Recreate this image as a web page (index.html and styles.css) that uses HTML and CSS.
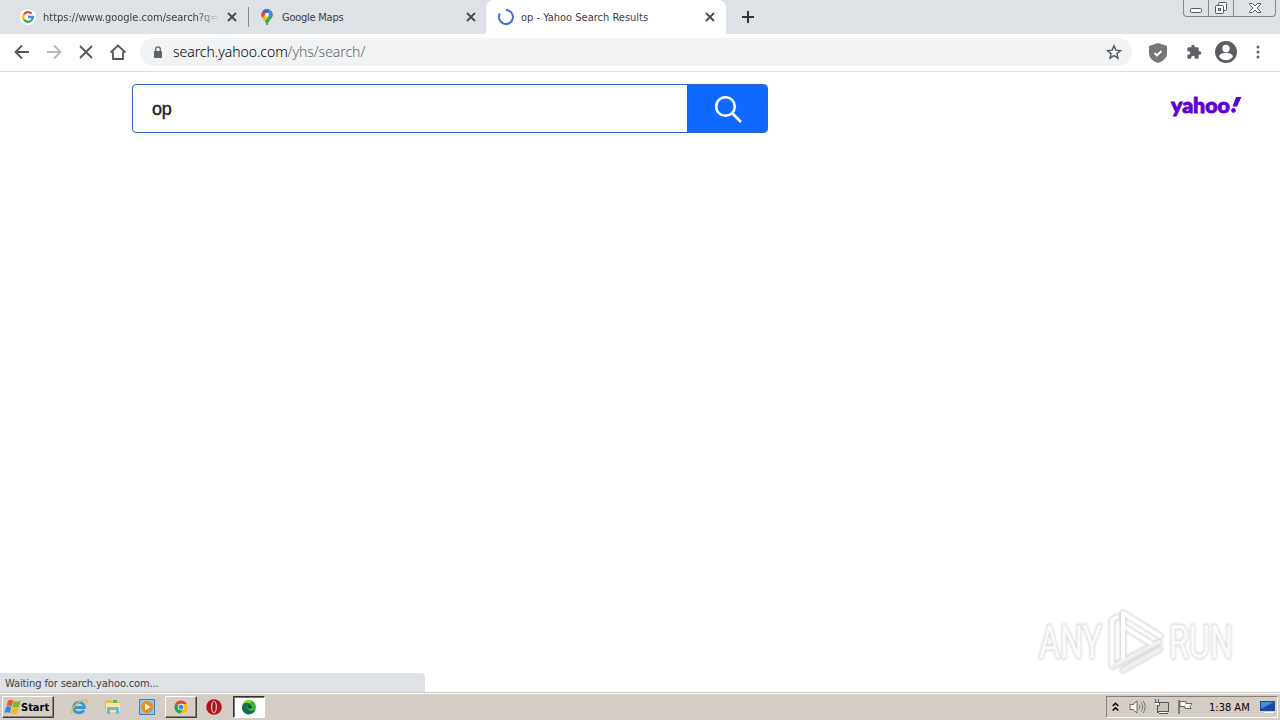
FILE: index.html
```html
<!DOCTYPE html>
<html lang="en">
<head>
    <meta charset="UTF-8">
    <meta name="viewport" content="width=device-width, initial-scale=1.0">
    <title>op - Yahoo Search Results</title>
    <link rel="stylesheet" href="styles.css">
</head>
<body>
    <!-- Tabs -->
    <header class="tab-strip">
        <div class="tab tab-first">
            <svg class="favicon" viewBox="0 0 16 16">
                <circle cx="8" cy="8" r="8" fill="#fff"/>
                <g fill="none" stroke-width="2.3">
                    <path d="M4 5.3A4.8 4.8 0 0 1 11.5 4.6" stroke="#ea4335"/>
                    <path d="M4 10.7A4.8 4.8 0 0 1 4 5.3" stroke="#fbbc05"/>
                    <path d="M11.3 11.5A4.8 4.8 0 0 1 4 10.7" stroke="#34a853"/>
                    <path d="M8 8h4.9A4.8 4.8 0 0 1 11.3 11.5" stroke="#4285f4"/>
                </g>
            </svg>
            <span class="tab-title tab-url">https://www.google.com/search?q=</span>
            <svg class="tab-close" viewBox="0 0 10 10"><path d="M1 1l8 8M9 1l-8 8"/></svg>
        </div>
        <div class="tab tab-second">
            <svg class="favicon" viewBox="0 0 16 16">
                <clipPath id="pin"><path d="M8 0a5.6 5.6 0 0 0-5.6 5.7c0 4.5 4.4 4.7 5 10.3h1.2c.6-5.6 5-5.8 5-10.3A5.6 5.6 0 0 0 8 0z"/></clipPath>
                <g clip-path="url(#pin)">
                    <path fill="#34a853" d="M0 0h16v16H0z"/>
                    <path fill="#fbbc04" d="M1 12L12 1l3 3L4 15z"/>
                    <path fill="#4285f4" d="M5 0h11v3.5L9 9 7 5z"/>
                    <path fill="#34a853" d="M15 3L6 12l2 4h7z"/>
                    <path fill="#ea4335" d="M1 2l3-1 4 4-4 4-3-2z"/>
                    <path fill="#1a73e8" d="M3 2l4-3 3 4-2 2z"/>
                    <path fill="#fbbc04" d="M3 9l5-5 1 4-4 4z"/>
                </g>
                <circle cx="8" cy="5.7" r="2" fill="#fff"/>
            </svg>
            <span class="tab-title tab-maps">Google Maps</span>
            <svg class="tab-close" viewBox="0 0 10 10"><path d="M1 1l8 8M9 1l-8 8"/></svg>
        </div>
        <div class="tab tab-active">
            <svg class="favicon" viewBox="0 0 16 16"><path d="M8 1A7 7 0 1 1 1.9 4.5" fill="none" stroke="#3b72d9" stroke-width="2"/></svg>
            <span class="tab-title">op - Yahoo Search Results</span>
            <svg class="tab-close" viewBox="0 0 10 10"><path d="M1 1l8 8M9 1l-8 8"/></svg>
        </div>
        <svg class="new-tab" viewBox="0 0 12 12"><path d="M6 0v12M0 6h12"/></svg>
        <div class="window-controls">
            <span class="minimize"><svg width="14" height="14" viewBox="0 0 14 14"><rect x="1.5" y="7.5" width="11" height="4" rx="1"/></svg></span>
            <span class="restore"><svg width="14" height="14" viewBox="0 0 14 14"><rect x="4.5" y="1.5" width="8" height="8" rx="1"/><rect x="1.5" y="4.5" width="8" height="8" rx="1"/><rect x="4.5" y="7.5" width="2" height="2"/></svg></span>
            <span class="close-window"><svg width="14" height="14" viewBox="0 0 14 14"><path d="M1.5 2.5h3L7 5l2.5-2.5h3v1L9 7l3.5 3.5v1h-3L7 9l-2.5 2.500h-3v-1L5 7 1.500 3.500z"/></svg></span>
        </div>
    </header>

    <!-- Toolbar -->
    <nav class="toolbar">
        <div class="nav-buttons">
            <svg viewBox="0 0 16 16"><path d="M15 8H2M8 1.500L1.500 8 8 14.500"/></svg>
            <svg class="disabled" viewBox="0 0 16 16"><path d="M1 8h13M8 1.500L14.500 8 8 14.500"/></svg>
            <svg viewBox="0 0 16 16"><path d="M2 2l12 12M14 2L2 14"/></svg>
            <svg viewBox="0 0 16 16"><path d="M.5 8.500L8 1.500l7.500 7M3 7.500V15h10V7.500"/></svg>
        </div>
        <div class="omnibox">
            <svg class="lock" viewBox="0 0 10 13"><rect x="1" y="5" width="8" height="7" rx="1" fill="#5f6368"/><path d="M2.700 5V3.200a2.300 2.300 0 0 1 4.600 0V5" fill="none" stroke="#5f6368" stroke-width="1.400"/></svg>
            <span class="address">search.yahoo.com<span class="path">/yhs/search/</span></span>
            <svg class="star" viewBox="0 0 16 16"><path d="M8 1.800l1.800 4.300 4.700.4-3.600 3.100 1.100 4.600L8 11.700l-4 2.500 1.100-4.600L1.500 6.500l4.700-.4z"/></svg>
        </div>
        <div class="extensions">
            <svg class="shield" width="20" height="20" viewBox="0 0 20 20"><path fill="#777" d="M10 0l9 3v7c0 5-4 8.500-9 10-5-1.500-9-5-9-10V3z"/><path d="M6.500 10l2.500 2.500 4.500-4.500" fill="none" stroke="#fff" stroke-width="1.800"/></svg>
            <svg width="16" height="16" viewBox="0 0 24 24"><path fill="#5f6368" d="M20.500 11H19V7a2 2 0 0 0-2-2h-4V3.500a2.500 2.500 0 0 0-5 0V5H4a2 2 0 0 0-2 2v3.800h1.500a2.700 2.700 0 0 1 0 5.400H2V20a2 2 0 0 0 2 2h3.800v-1.500a2.700 2.700 0 0 1 5.400 0V22H17a2 2 0 0 0 2-2v-4h1.500a2.500 2.500 0 0 0 0-5z"/></svg>
            <svg width="22" height="22" viewBox="0 0 22 22"><circle cx="11" cy="11" r="11" fill="#5a5d61"/><circle cx="11" cy="7.500" r="3.700" fill="#fff"/><path fill="#fff" d="M4 15.600c1-5.200 13-5.200 14 0a8.500 8.500 0 0 1-14 0z"/></svg>
            <svg width="4" height="14" viewBox="0 0 4 14" fill="#5f6368"><circle cx="2" cy="2" r="1.500"/><circle cx="2" cy="7" r="1.500"/><circle cx="2" cy="12" r="1.500"/></svg>
        </div>
    </nav>

    <!-- Page -->
    <main class="page">
        <div class="page-header">
            <form class="search-box">
                <span class="query">op</span>
                <span class="search-button">
                    <svg width="30" height="30" viewBox="0 0 30 30"><circle cx="12.500" cy="11.500" r="9.300"/><path d="M19 18l9 9"/></svg>
                </span>
            </form>
            <svg class="yahoo" width="74" height="34" viewBox="0 0 74 34">
                <text x="1" y="23" textLength="59" lengthAdjust="spacingAndGlyphs">yahoo</text>
                <path d="M66 7h5.500l-4.500 9.500h-4.500zM63.500 18a2.400 2.400 0 1 1-.1 0z"/>
            </svg>
        </div>
        <svg class="watermark" width="220" height="76" viewBox="0 0 220 76">
            <g class="mark-shadow">
                <text x="8" y="51" textLength="63" lengthAdjust="spacingAndGlyphs">ANY</text>
                <text x="138" y="51" textLength="64" lengthAdjust="spacingAndGlyphs">RUN</text>
                <path d="M92 6v47M92 6l37 23M92 19l29 18M81 58V13l5-3M82 59l10-5 36-19M92 63l37-21"/>
            </g>
            <g class="mark-text">
                <text x="8" y="51" textLength="63" lengthAdjust="spacingAndGlyphs">ANY</text>
                <text x="138" y="51" textLength="64" lengthAdjust="spacingAndGlyphs">RUN</text>
                <path d="M92 6v47M92 6l37 23M92 19l29 18M81 58V13l5-3"/>
                <path class="mark-low" d="M82 59l10-5 36-19M92 63l37-21"/>
            </g>
        </svg>
        <div class="status">Waiting for search.yahoo.com...</div>
    </main>

    <!-- Taskbar -->
    <footer class="taskbar">
        <div class="start">
            <svg width="17" height="16" viewBox="0 0 17 16">
                <path fill="#e9622c" d="M4 1.500c2-1.300 3.500-1 5.500 0L7.700 7.500c-1.500-1-3-1.200-5-.2z"/>
                <path fill="#7eb72f" d="M10 2c2 1 4 1 6.500-.2L15 7.700c-2.300 1-4.500 1-6.500 0z"/>
                <path fill="#3b86d6" d="M2.200 8c2-1 3.500-.8 5.200.2L5.800 14c-1.500-1-3-1.200-5.500-.2z"/>
                <path fill="#f6b91c" d="M8.200 8.500c2 1 4 1 6.500 0L13.200 14.500c-2.300 1-4.500 1-6.500 0z"/>
            </svg>
            <span>Start</span>
        </div>
        <div class="quick-launch">
            <svg width="18" height="18" viewBox="0 0 18 18">
                <path d="M3.800 9.500h10.500c0-7-10.500-7-10.500 0s8.500 6 10 2.700" fill="none" stroke="#2f9bdc" stroke-width="2.800"/>
                <path d="M2 16C-1 13 8 2.500 15 1.500c3-.3 2 2.500 1 4" fill="none" stroke="#e8b93c" stroke-width="1.300"/>
            </svg>
            <svg width="18" height="18" viewBox="0 0 18 18">
                <path fill="#e7bd55" d="M1 2h6l1 2h8v9H1z"/><path fill="#65b950" d="M9 2h4v3H9z"/>
                <path fill="#fae69c" d="M2 5h14v9H2z"/><path fill="#6db8e6" d="M3 9h12v7h-3v-4H6v4H3z"/>
            </svg>
            <svg width="18" height="18" viewBox="0 0 18 18">
                <path fill="#8dc6ef" stroke="#3b83bd" d="M1.500 1.500h15v15h-15z"/><circle cx="9" cy="9" r="6" fill="#f28a16"/><path fill="#fff" d="M7 5.500l5.500 3.500L7 12.500z"/>
            </svg>
        </div>
        <div class="task raised">
            <svg width="14" height="14" viewBox="0 0 16 16">
                <circle cx="8" cy="8" r="7.500" fill="#fbbc05"/>
                <path fill="#de4b3c" d="M8 8L1.500 4.300a7.500 7.500 0 0 1 13 .2H8z"/>
                <path fill="#2ba24c" d="M8 8L1.500 4.300a7.500 7.500 0 0 0 5.800 11.200L11 9.500z"/>
                <circle cx="8" cy="8" r="3.700" fill="#fff"/><circle cx="8" cy="8" r="2.900" fill="#4285f4"/>
            </svg>
        </div>
        <svg class="opera" width="16" height="16" viewBox="0 0 16 16"><circle cx="8" cy="8" r="7.800" fill="#b3161a"/><ellipse cx="8" cy="8" rx="3" ry="6" fill="#f1dcd6"/><ellipse cx="8" cy="8" rx="1.700" ry="5.200" fill="#a01216"/></svg>
        <div class="task pressed">
            <svg width="16" height="16" viewBox="0 0 16 16">
                <circle cx="8" cy="8" r="7" fill="#35b835"/>
                <path fill="#86dc28" d="M2 4.500a7 7 0 0 1 9-2.800L8 5z"/>
                <path fill="#146c5e" d="M1 8c1-5 8-6 9-1-4-2-5 2-2 4 2 1.500 5 1 6.500 0A7 7 0 0 1 1 8z"/>
                <path fill="#123c30" d="M7 7.500c1-2 4-1.500 3.500 1C10 10 7 10 7 7.500z"/>
            </svg>
        </div>
        <div class="tray">
            <svg class="chevrons" width="7" height="10" viewBox="0 0 7 10"><path d="M.7 4L3.500 1.200 6.300 4M.7 8.500l2.800-2.800 2.800 2.800" fill="none" stroke="#000" stroke-width="1.500"/></svg>
            <svg width="17" height="16" viewBox="0 0 17 16"><path d="M1 5.500h3L8 2v12l-4-3.500H1z" fill="#fff" stroke="#666"/><path d="M10 5.500q2 2.500 0 5M12 3.500q3.500 4.500 0 9M14 2q4.500 6 0 12" fill="none" stroke="#777"/></svg>
            <svg width="17" height="16" viewBox="0 0 17 16"><path d="M4.500 3.500h11v9h-11z" fill="#c4c4c0" stroke="#555"/><path d="M6 14.500h9M2.500 0v3M5.500 0v3M1.500 3.500h5v3l-2 1v6h2" fill="none" stroke="#555"/><path fill="#fff" d="M2 4h4v2H2zM6 13h8v1H6z"/></svg>
            <svg width="17" height="16" viewBox="0 0 17 16"><path d="M2 1v14" stroke="#666" stroke-width="1.500"/><path d="M3 2.500h6v2h6l-2 3 1 2H8v-2H3z" fill="#fff" stroke="#666"/></svg>
            <span class="clock">1:38 AM</span>
            <svg class="desktop" width="17" height="14" viewBox="0 0 17 14"><path fill="#1d4998" d="M1 1h15v10H1z"/><path fill="#478adc" d="M2 2h13L2 9z"/><path fill="#fff" d="M5 12h9v1H5z"/></svg>
        </div>
    </footer>
</body>
</html>
```
FILE: styles.css
```css
* {
    box-sizing: border-box;
}
body {
    margin: 0;
    height: 720px;
    overflow: hidden;
    display: flex;
    flex-direction: column;
    background-color: #fff;
    font-family: "DejaVu Sans Condensed", "DejaVu Sans", sans-serif;
    font-stretch: condensed;
    font-size: 11px;
    color: #222;
}
svg {
    display: block;
    flex: none;
}
.tab-strip {
    height: 34px;
    display: flex;
    background-color: #dee1e6;
}
.tab {
    display: flex;
    align-items: center;
    height: 34px;
    color: #3c4043;
}
.tab-first {
    width: 249px;
    padding: 0 12px 0 20px;
    background: linear-gradient(#85898f, #85898f) right center / 1px 20px no-repeat;
}
.tab-second {
    width: 237px;
    padding: 0 10px;
}
.tab-active {
    width: 240px;
    padding: 0 11px 0 12px;
    background-color: #fff;
    border-radius: 8px 8px 0 0;
}
.favicon {
    width: 16px;
    height: 16px;
    margin-right: 7px;
}
.tab-title {
    flex: 1;
    white-space: nowrap;
}
.tab-url {
    flex: none;
    width: 176px;
    margin-right: 8px;
    -webkit-mask-image: linear-gradient(90deg, #000 155px, transparent);
    mask-image: linear-gradient(90deg, #000 155px, transparent);
}
.tab-maps {
    letter-spacing: -0.25px;
}
.tab-close {
    width: 10px;
    height: 10px;
    fill: none;
    stroke: #45494d;
    stroke-width: 1.8;
}
.new-tab {
    width: 12px;
    height: 12px;
    margin: 11px 0 0 16px;
    stroke: #303438;
    stroke-width: 2;
}
.window-controls {
    display: flex;
    width: 93px;
    height: 17px;
    margin: 0 4px 0 auto;
    border: 1px solid #83878e;
    border-top: 0;
    border-radius: 0 0 4px 4px;
}
.window-controls span {
    display: flex;
    justify-content: center;
    padding-top: 1px;
}
.window-controls svg {
    fill: #f7f7f8;
    stroke: #555960;
}
.minimize,
.restore {
    width: 25px;
    border-right: 1px solid #83878e;
}
.close-window {
    flex: 1;
}
.toolbar {
    height: 38px;
    display: flex;
    align-items: center;
    padding: 0 20px 1px 14px;
    border-bottom: 1px solid #dadce0;
}
.nav-buttons {
    display: flex;
    gap: 16px;
    width: 126px;
}
.nav-buttons svg {
    width: 16px;
    height: 16px;
    fill: none;
    stroke: #54585c;
    stroke-width: 1.8;
}
.nav-buttons .disabled {
    stroke: #b5b7ba;
}
.omnibox {
    display: flex;
    align-items: center;
    width: 992px;
    height: 28px;
    padding: 0 10px 0 13px;
    border-radius: 14px;
    background-color: #f1f3f4;
}
.lock {
    width: 10px;
    height: 13px;
    margin-right: 10px;
}
.address {
    padding-bottom: 2px;
    font-family: "Noto Sans", sans-serif;
    font-stretch: normal;
    font-size: 14px;
    font-weight: 300;
    letter-spacing: -0.04px;
    color: #000;
}
.path {
    color: #5f6368;
}
.star {
    width: 16px;
    height: 16px;
    margin-left: auto;
    fill: none;
    stroke: #54585c;
    stroke-width: 1.4;
}
.extensions {
    display: flex;
    align-items: center;
    margin-left: 16px;
}
.shield {
    margin-top: 2px;
}
.extensions svg:nth-child(2) {
    margin-left: 18px;
}
.extensions svg:nth-child(3) {
    margin-left: 13px;
}
.extensions svg:nth-child(4) {
    margin-left: 19px;
}
.page {
    flex: 1;
    display: flex;
    flex-direction: column;
}
.page-header {
    display: flex;
    justify-content: space-between;
    padding: 12px 36px 0 132px;
}
.search-box {
    display: flex;
    width: 636px;
    height: 49px;
    margin: 0;
    border: 1px solid #2c64c9;
    border-radius: 4px;
    overflow: hidden;
}
.query {
    flex: 1;
    padding-left: 19px;
    font-family: "Liberation Sans", Arial, sans-serif;
    font-stretch: normal;
    font-size: 18px;
    line-height: 49px;
    letter-spacing: -0.3px;
    -webkit-text-stroke: 0.4px #222;
}
.search-button {
    width: 80px;
    padding: 10px 0 0 26px;
    background-color: #0f69ff;
}
.search-button svg {
    fill: none;
    stroke: #fff;
    stroke-width: 2.6;
}
.yahoo {
    margin-top: 6px;
    fill: #5f01d1;
}
.yahoo text {
    font: 900 21px Lato, sans-serif;
    stroke: #5f01d1;
    stroke-width: .9px;
}
.watermark {
    flex: none;
    margin: auto 29px -10px auto;
}
.mark-shadow,
.mark-text {
    font: 400 47px Roboto, sans-serif;
    stroke-linejoin: round;
    stroke-linecap: round;
}
.mark-shadow {
    fill: #dcdcdc;
    stroke: #dcdcdc;
    stroke-width: 3px;
    filter: blur(1.3px);
}
.mark-text {
    fill: #fafafa;
}
.mark-shadow path {
    fill: none;
    stroke-width: 7px;
}
.mark-text path {
    fill: none;
    stroke: #fff;
    stroke-width: 4px;
}
.mark-text .mark-low {
    stroke: #f0f0f0;
}
.status {
    width: 425px;
    height: 20px;
    padding-left: 5px;
    line-height: 21px;
    letter-spacing: -0.1px;
    background-color: #dee1e6;
    border-top-right-radius: 4px;
    color: #3c4043;
}
.taskbar {
    display: flex;
    align-items: center;
    height: 27px;
    padding: 0 2px 1px;
    background-color: #d5cec6;
    border-top: 1px solid #fff;
    box-shadow: 0 -1px #c9c8c3;
}
.start {
    display: flex;
    align-items: center;
    width: 52px;
    height: 22px;
    padding-left: 1px;
    font-weight: bold;
    color: #000;
    border: 1px solid;
    border-color: #fff #404040 #404040 #fff;
    box-shadow: inset -1px -1px #85817a;
}
.start span,
.clock {
    padding-top: 2px;
}
.quick-launch {
    display: flex;
    gap: 16px;
    margin-left: 16px;
    padding-top: 1px;
}
.task {
    display: flex;
    align-items: center;
    justify-content: center;
    width: 32px;
    height: 22px;
    border: 1px solid;
}
.raised {
    margin-left: 9px;
    border-color: #fff #404040 #404040 #fff;
    box-shadow: inset -1px -1px #85817a;
}
.opera {
    margin: 1px 11px 0 9px;
}
.pressed {
    background-color: #fff;
    border-color: #303030 #fff #fff #303030;
    box-shadow: inset 1px 1px #777;
}
.tray {
    display: flex;
    align-items: center;
    width: 172px;
    height: 22px;
    margin-left: auto;
    padding-left: 5px;
    border: 1px solid;
    border-color: #85817a #fff #fff #85817a;
    color: #000;
}
.chevrons {
    margin-right: 10px;
}
.tray svg + svg {
    margin-right: 7px;
}
.clock {
    width: 48px;
    margin-left: 8px;
    white-space: nowrap;
}
.desktop {
    margin-left: 2px;
}
```
